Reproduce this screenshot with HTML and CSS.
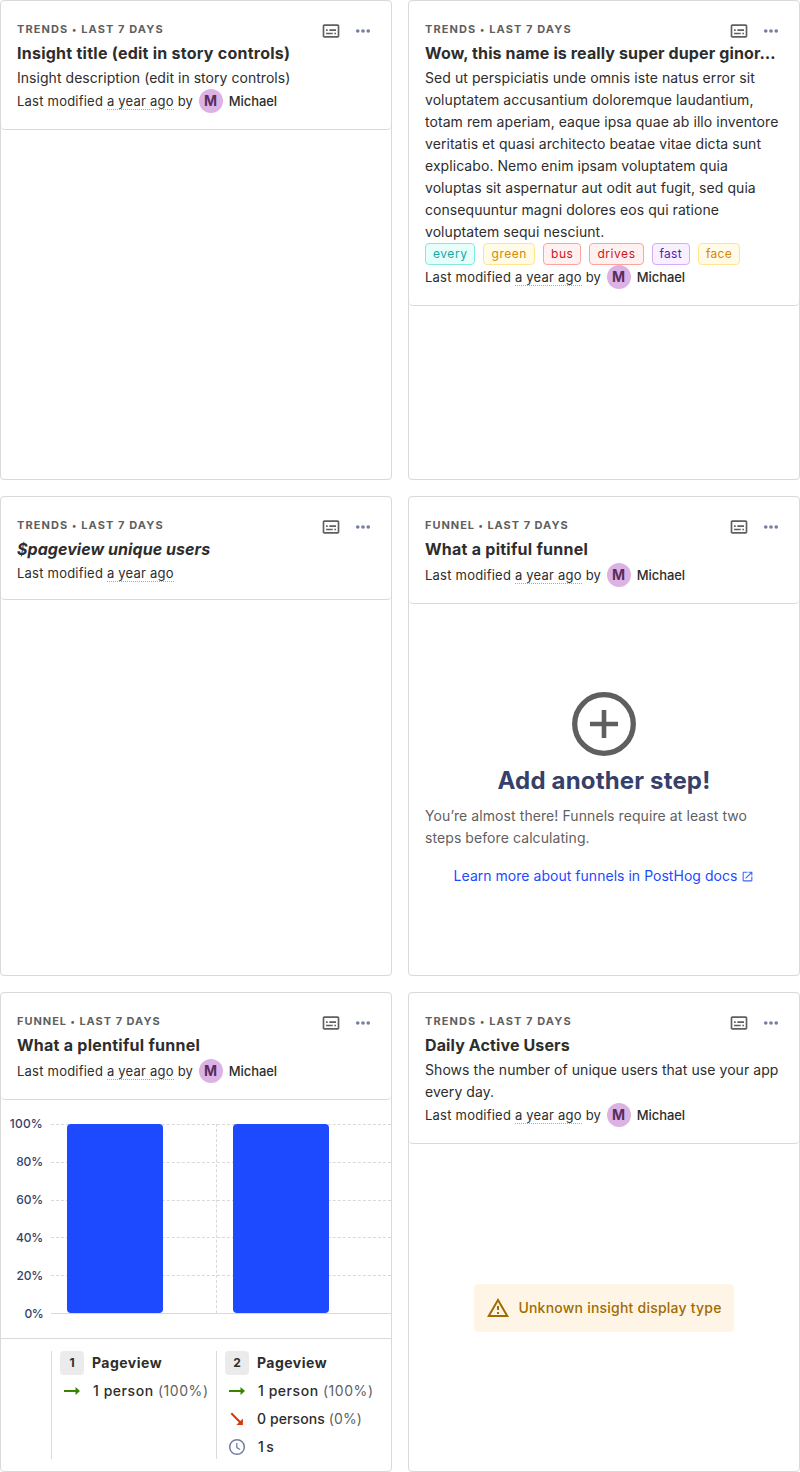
FILE: index.html
```html
<!DOCTYPE html>
<html lang="en">
<head>
<meta charset="utf-8">
<title>Insight cards</title>
<link rel="stylesheet" href="styles.css">
</head>
<body>
<svg class="defs" width="0" height="0">
  <symbol id="details" viewBox="0 0 24 24"><path fill="currentColor" d="M20 4H4c-1.100 0-2 .9-2 2v12c0 1.100.9 2 2 2h16c1.100 0 2-.9 2-2V6c0-1.100-.9-2-2-2zm0 14H4V6h16v12zM6 10h2v2H6zm0 4h8v2H6zm10 0h2v2h-2zm-6-4h8v2h-8z"/></symbol>
  <symbol id="dots" viewBox="0 0 24 24"><g fill="currentColor"><circle cx="5.700" cy="12" r="2.200"/><circle cx="12" cy="12" r="2.200"/><circle cx="18.300" cy="12" r="2.200"/></g></symbol>
  <symbol id="arrow" viewBox="0 0 24 24"><path fill="currentColor" d="M4 11h11.500V8l4.500 4-4.500 4v-3H4z"/></symbol>
</svg>
<main class="grid">
  <section class="card">
    <header class="meta">
      <div class="top"><h5>Trends <i>•</i> Last 7 days</h5><div class="controls"><svg class="icon details"><use href="#details"/></svg><svg class="icon dots"><use href="#dots"/></svg></div></div>
      <h4>Insight title (edit in story controls)</h4>
      <p class="desc short">Insight description (edit in story controls)</p>
      <div class="modified"><span>Last modified <span class="ago">a year ago</span> by</span><i class="avatar">M</i><b>Michael</b></div>
    </header>
  </section>
  <section class="card">
    <header class="meta">
      <div class="top"><h5>Trends <i>•</i> Last 7 days</h5><div class="controls"><svg class="icon details"><use href="#details"/></svg><svg class="icon dots"><use href="#dots"/></svg></div></div>
      <h4 class="long">Wow, this name is really super duper ginor…</h4>
      <p class="desc">Sed ut perspiciatis unde omnis iste natus error sit voluptatem accusantium doloremque laudantium, totam rem aperiam, eaque ipsa quae ab illo inventore veritatis et quasi architecto beatae vitae dicta sunt explicabo. Nemo enim ipsam voluptatem quia voluptas sit aspernatur aut odit aut fugit, sed quia consequuntur magni dolores eos qui ratione voluptatem sequi nesciunt.</p>
      <div class="tags"><span class="tag cyan">every</span><span class="tag gold">green</span><span class="tag red">bus</span><span class="tag red">drives</span><span class="tag purple">fast</span><span class="tag gold last">face</span></div>
      <div class="modified"><span>Last modified <span class="ago">a year ago</span> by</span><i class="avatar">M</i><b>Michael</b></div>
    </header>
  </section>
  <section class="card">
    <header class="meta">
      <div class="top"><h5>Trends <i>•</i> Last 7 days</h5><div class="controls"><svg class="icon details"><use href="#details"/></svg><svg class="icon dots"><use href="#dots"/></svg></div></div>
      <h4 class="derived">$pageview unique users</h4>
      <div class="modified"><span>Last modified <span class="ago">a year ago</span></span></div>
    </header>
  </section>
  <section class="card">
    <header class="meta">
      <div class="top"><h5 class="funnel">Funnel <i>•</i> Last 7 days</h5><div class="controls"><svg class="icon details"><use href="#details"/></svg><svg class="icon dots"><use href="#dots"/></svg></div></div>
      <h4>What a pitiful funnel</h4>
      <div class="modified"><span>Last modified <span class="ago">a year ago</span> by</span><i class="avatar">M</i><b>Michael</b></div>
    </header>
    <div class="empty">
      <svg class="plus" viewBox="0 0 64 64"><circle cx="32" cy="32" r="29.300" fill="none" stroke="currentColor" stroke-width="5.300"/><path d="M18 32h28M32 18v28" stroke="currentColor" stroke-width="4.600"/></svg>
      <h2>Add another step!</h2>
      <p>You’re almost there! Funnels require at least two steps before calculating.</p>
      <a>Learn more about funnels in PostHog docs <svg class="ext" viewBox="0 0 24 24"><path fill="currentColor" d="M19 19H5V5h7V3H5c-1.110 0-2 .9-2 2v14c0 1.100.89 2 2 2h14c1.100 0 2-.9 2-2v-7h-2v7zM14 3v2h3.590l-9.830 9.830 1.410 1.410L19 6.410V10h2V3h-7z"/></svg></a>
    </div>
  </section>
  <section class="card">
    <header class="meta">
      <div class="top"><h5 class="funnel">Funnel <i>•</i> Last 7 days</h5><div class="controls"><svg class="icon details"><use href="#details"/></svg><svg class="icon dots"><use href="#dots"/></svg></div></div>
      <h4>What a plentiful funnel</h4>
      <div class="modified"><span>Last modified <span class="ago">a year ago</span> by</span><i class="avatar">M</i><b>Michael</b></div>
    </header>
    <svg class="chart" viewBox="0 0 390 238">
      <g class="gridlines"><path d="M50 24.500h340M50 62.500h340M50 100.500h340M50 137.500h340M50 175.500h340M215.500 24v189"/></g>
      <path class="axis" d="M50 213.500h340"/>
      <rect class="bar" x="66" y="24" width="96" height="189" rx="4"/>
      <rect class="bar" x="232" y="24" width="96" height="189" rx="4"/>
      <g class="ticks"><text class="full" x="42" y="28">100%</text><text x="42" y="66">80%</text><text x="42" y="104">60%</text><text x="42" y="142">40%</text><text x="42" y="180">20%</text><text class="zero" x="42" y="218">0%</text></g>
    </svg>
    <div class="steps">
      <div class="step">
        <div class="row name"><i class="num">1</i>Pageview</div>
        <div class="row"><svg class="icon green"><use href="#arrow"/></svg><span class="one">1 person <em>(100%)</em></span></div>
      </div>
      <div class="step">
        <div class="row name"><i class="num">2</i>Pageview</div>
        <div class="row"><svg class="icon green"><use href="#arrow"/></svg><span class="one">1 person <em>(100%)</em></span></div>
        <div class="row"><svg class="icon orange" viewBox="0 0 24 24"><path fill="currentColor" d="M7 5.600l8.400 8.400 2.500-2.500V18h-6.500l2.500-2.500L5.600 7z"/></svg><span class="none">0 persons <em>(0%)</em></span></div>
        <div class="row"><svg class="icon clock" viewBox="0 0 24 24" fill="none" stroke="currentColor"><circle cx="12" cy="12" r="7.300" stroke-width="1.500"/><path d="M11.800 8V12.600l3.200 1.900" stroke-width="1.300"/></svg><span class="time">1s</span></div>
      </div>
    </div>
  </section>
  <section class="card">
    <header class="meta">
      <div class="top"><h5>Trends <i>•</i> Last 7 days</h5><div class="controls"><svg class="icon details"><use href="#details"/></svg><svg class="icon dots"><use href="#dots"/></svg></div></div>
      <h4 class="long">Daily Active Users</h4>
      <p class="desc">Shows the number of unique users that use your app every day.</p>
      <div class="modified"><span>Last modified <span class="ago">a year ago</span> by</span><i class="avatar">M</i><b>Michael</b></div>
    </header>
    <div class="unknown"><div class="banner"><svg class="icon" viewBox="0 0 24 24"><path fill="currentColor" d="M12 5.990L19.530 19H4.470L12 5.990M12 2L1 21h22L12 2zm1 14h-2v2h2v-2zm0-6h-2v4h2v-4z"/></svg>Unknown insight display type</div></div>
  </section>
</main>
</body>
</html>
```
FILE: styles.css
```css
* { box-sizing: border-box; margin: 0; }
body { font: 14px/22px Inter, sans-serif; color: #2d2d2d; background: #fff; }
.defs { position: absolute; }
.grid { display: grid; grid-template-columns: 392px 392px; grid-auto-rows: 480px; gap: 16px; }
.card { display: flex; flex-direction: column; border: 1px solid #d9d9d9; border-radius: 4px; overflow: hidden; }
.meta { padding: 16px; border-bottom: 1px solid #d9d9d9; border-radius: 4px; flex: none; }
.top { display: flex; justify-content: space-between; height: 24px; }
h5 { font-size: 11px; line-height: 24px; font-weight: 700; letter-spacing: 1.1px; text-transform: uppercase; color: #5f5f5f; }
h5 i { font-size: 9px; font-style: normal; }
.funnel { letter-spacing: .97px; }
.controls { display: flex; gap: 12px; margin-top: 3px; padding-right: 2px; }
.icon { display: block; width: 24px; height: 24px; flex: none; }
.details { width: 20px; height: 20px; margin-top: 1px; color: #5f5f5f; }
.dots { width: 20px; height: 20px; margin-top: 1px; color: #747ea2; }
h4 { font-size: 16px; line-height: 24px; font-weight: 700; letter-spacing: .25px; margin-bottom: 2px; overflow: hidden; white-space: nowrap; text-overflow: ellipsis; }
.long { letter-spacing: .12px; }
.derived { font-style: italic; letter-spacing: .06px; }
.desc { letter-spacing: .065px; }
.short { letter-spacing: .04px; }
.modified { display: flex; align-items: center; font-size: 13px; line-height: 20px; letter-spacing: .22px; }
.modified b { font-weight: 500; letter-spacing: -.05px; }
.ago { border-bottom: 1px dotted #a9a9a9; }
.avatar { width: 24px; height: 24px; margin: 0 6px 0 5.5px; border-radius: 50%; background: #dcb1e3; color: #572e5e; font: 700 14px/24px Inter, sans-serif; letter-spacing: 0; text-align: center; }
.tags { display: flex; gap: 8px; }
.tag { border: 1px solid; border-radius: 4px; padding: 0 7px; font-size: 12px; line-height: 20px; letter-spacing: .55px; }
.cyan { color: #13a8a8; background: #e6fffb; border-color: #87e8de; }
.gold { color: #d48806; background: #fffbe6; border-color: #ffe58f; }
.red { color: #cf1322; background: #fff1f0; border-color: #ffa39e; }
.purple { color: #531dab; background: #f9f0ff; border-color: #d3adf7; }
.purple, .last { letter-spacing: .3px; }
.empty { flex: 1; display: flex; flex-direction: column; align-items: center; justify-content: center; padding: 0 16px 1px; color: #5f5f5f; }
.plus { width: 64px; height: 64px; }
.empty h2 { margin: 8px 0 7px; font-size: 24px; line-height: 34px; font-weight: 700; letter-spacing: .17px; color: #35416b; }
.empty p { width: 100%; margin-bottom: 16px; padding-right: 8px; letter-spacing: .08px; }
.empty a { color: #1d4aff; letter-spacing: .03px; }
.ext { width: 13px; height: 13px; vertical-align: -2px; opacity: .85; }
.chart { width: 390px; height: 238px; flex: none; font-size: 12px; }
.gridlines { fill: none; stroke: #d9d9d9; stroke-dasharray: 3 2.03; }
.axis { stroke: #d9d9d9; }
.bar { fill: #1d4aff; }
.ticks { fill: #35416b; text-anchor: end; font-weight: 500; letter-spacing: -.15px; }
.ticks .full { letter-spacing: .2px; }
.ticks .zero { letter-spacing: -.6px; }
.steps { flex: 1; display: grid; grid-template-columns: 165px 1fr; padding: 12px 0 12px 50px; border-top: 1px solid #d9d9d9; }
.step { display: flex; flex-direction: column; gap: 4px; padding-left: 8px; border-left: 1px solid #d9d9d9; white-space: nowrap; }
.row { display: flex; align-items: center; gap: 8px; height: 24px; font-weight: 500; }
.name { font-weight: 700; letter-spacing: .48px; }
.row em { font-style: normal; font-weight: 400; color: #5f5f5f; }
.one { padding-left: 1px; letter-spacing: .55px; }
.none { letter-spacing: .1px; }
.time { padding-left: 1px; letter-spacing: 2.5px; }
.num { width: 24px; height: 24px; border-radius: 4px; background: #ebebeb; font: 700 12px/24px Inter, sans-serif; letter-spacing: 0; text-align: center; }
.green { color: #388600; }
.orange { color: #db3707; }
.clock { color: #747ea2; }
.unknown { flex: 1; display: flex; align-items: center; justify-content: center; }
.banner { display: flex; align-items: center; gap: 8px; height: 48px; padding: 0 12px; border-radius: 4px; background: #fff5e6; color: #a06c00; font-weight: 500; letter-spacing: .22px; }
```
